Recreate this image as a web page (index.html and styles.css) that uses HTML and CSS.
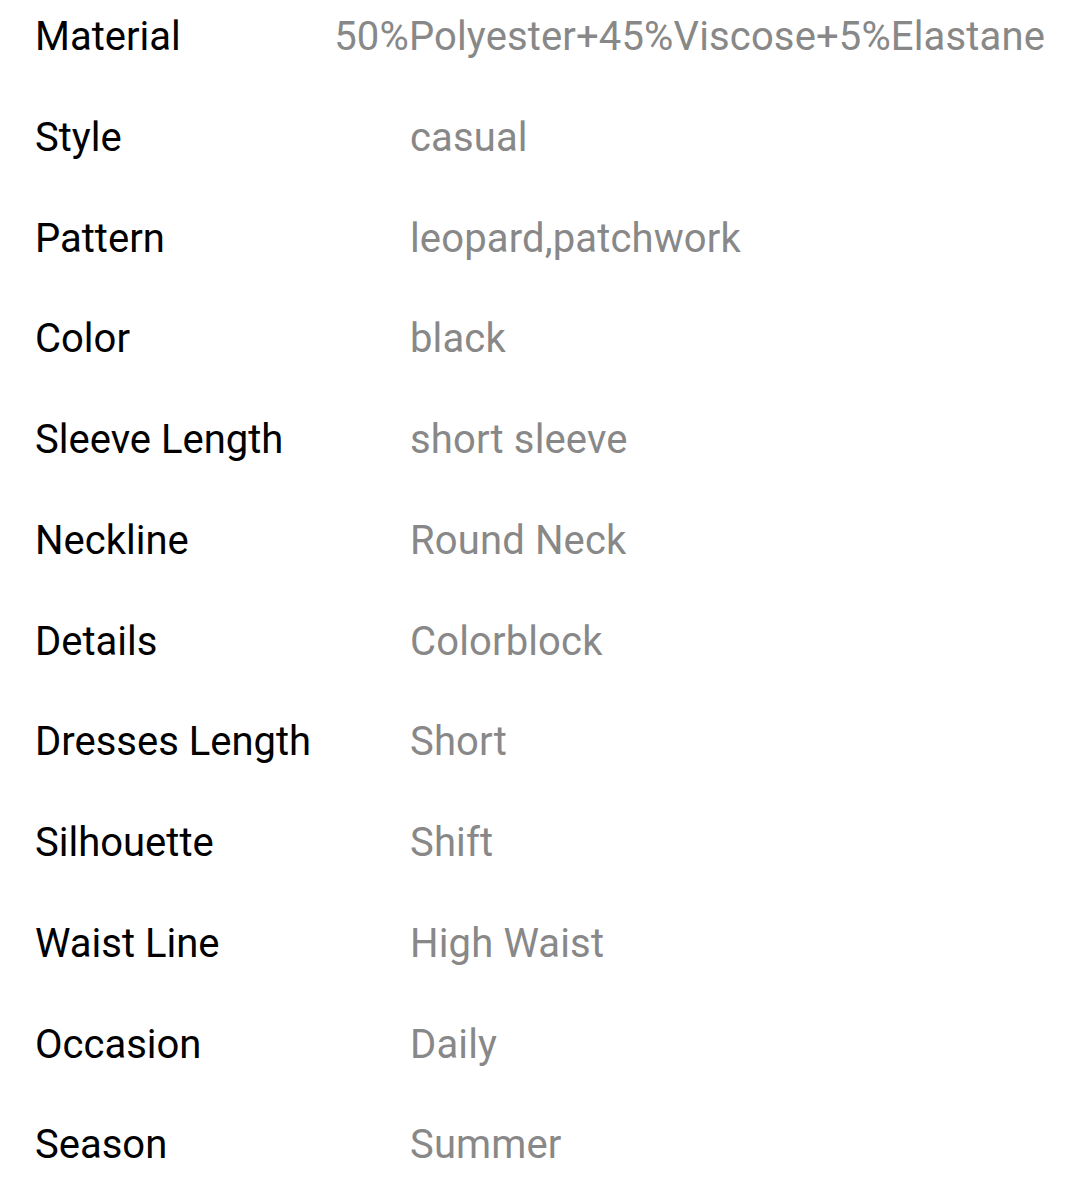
FILE: index.html
```html
<!DOCTYPE html>
<html>
<head>
<meta charset="utf-8">
<link rel="stylesheet" href="styles.css">
</head>
<body>
<div class="specs">
  <div class="row"><div class="label">Material</div><div class="value">50%Polyester+45%Viscose+5%Elastane</div></div>
  <div class="row"><div class="label">Style</div><div class="value">casual</div></div>
  <div class="row"><div class="label">Pattern</div><div class="value">leopard,patchwork</div></div>
  <div class="row"><div class="label">Color</div><div class="value">black</div></div>
  <div class="row"><div class="label">Sleeve Length</div><div class="value">short sleeve</div></div>
  <div class="row"><div class="label">Neckline</div><div class="value">Round Neck</div></div>
  <div class="row"><div class="label">Details</div><div class="value">Colorblock</div></div>
  <div class="row"><div class="label">Dresses Length</div><div class="value">Short</div></div>
  <div class="row"><div class="label">Silhouette</div><div class="value">Shift</div></div>
  <div class="row"><div class="label">Waist Line</div><div class="value">High Waist</div></div>
  <div class="row"><div class="label">Occasion</div><div class="value">Daily</div></div>
  <div class="row"><div class="label">Season</div><div class="value">Summer</div></div>
</div>
</body>
</html>
```

FILE: styles.css
```css
html, body {
  margin: 0;
  padding: 0;
  background: #fff;
}
body {
  font-family: Roboto, "Liberation Sans", sans-serif;
  font-size: 40px;
  line-height: 47px;
}
.specs {
  display: flex;
  flex-direction: column;
  gap: 53.75px;
  padding: 13px 35px 0 35px;
}
.row {
  display: flex;
}
.label {
  flex: 0 1 375px;
  min-width: 0;
  color: #000;
  white-space: nowrap;
}
.value {
  flex: none;
  color: #888;
  letter-spacing: 0.14px;
  white-space: nowrap;
}
```
